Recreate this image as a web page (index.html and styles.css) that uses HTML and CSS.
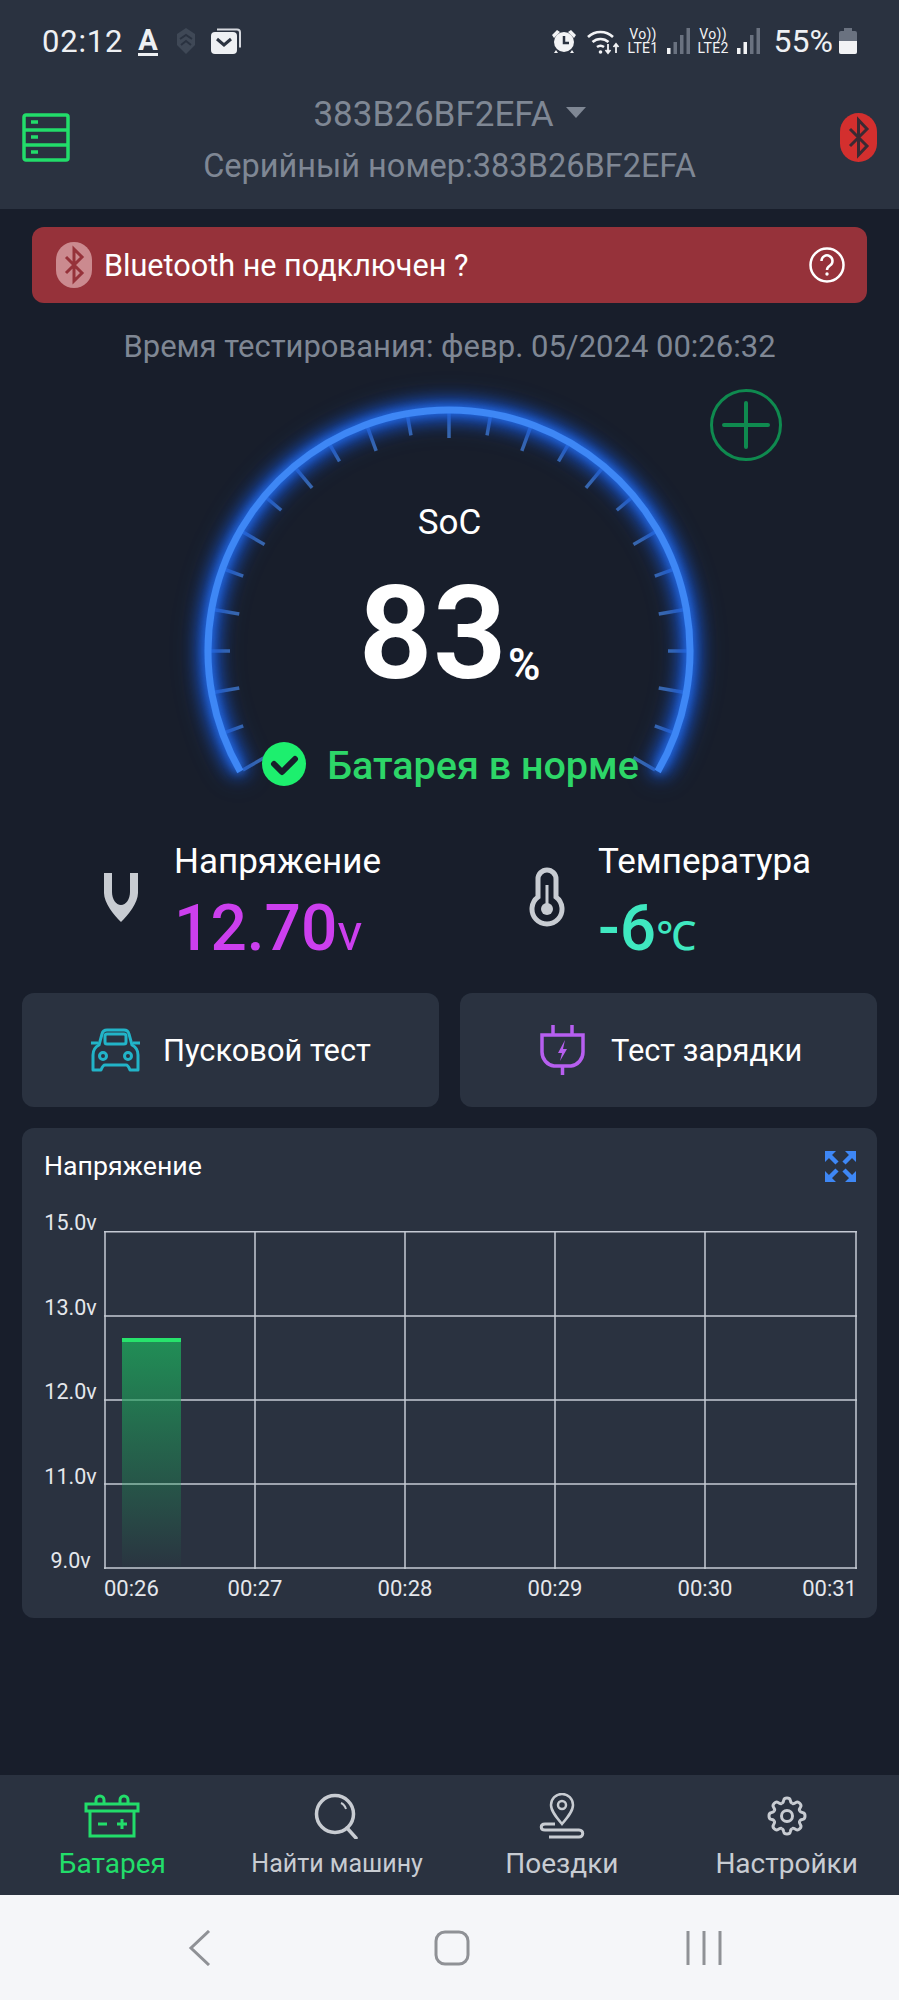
FILE: index.html
```html
<!DOCTYPE html>
<html lang="ru">
<head>
    <meta charset="UTF-8">
    <meta name="viewport" content="width=device-width, initial-scale=1.0">
    <title>Батарея</title>
    <link rel="stylesheet" href="styles.css">
</head>
<body>
<div class="app">
    <header class="header">
        <div class="status-bar">
            <div class="status-left">
                <span class="clock">02:12</span>
                <span class="status-a">A</span>
                <svg class="ic-shield" viewBox="0 0 20 28"><path d="M10 1l9 6v11l-9 9-9-9V7z" fill="#3f4856"/><path d="M4 12l6-4 6 4M5 18l5-4 5 4" fill="none" stroke="#2a3240" stroke-width="2"/></svg>
                <svg class="ic-mail" viewBox="0 0 31 26"><path d="M7 1.500h20a3 3 0 0 1 3 3v15" fill="none" stroke="#d5d8de" stroke-width="2"/><rect x="1" y="4" width="26" height="22" rx="4" fill="#eef0f3"/><path d="M7 11l7 6 7-6" fill="none" stroke="#2a3240" stroke-width="3"/></svg>
            </div>
            <div class="status-right">
                <svg class="ic-alarm" viewBox="0 0 26 26"><circle cx="13" cy="14" r="10" fill="#f2f3f5"/><path d="M1 7l5-5 3 2-6 6zM25 7l-5-5-3 2 6 6zM5 22l-2 3h4zM21 22l2 3h-4z" fill="#f2f3f5"/><path d="M13 8v7h5" fill="none" stroke="#2a3240" stroke-width="2.500"/></svg>
                <svg class="ic-wifi" viewBox="0 0 33 28"><g fill="none" stroke="#f2f3f5" stroke-width="2.600"><path d="M1 10a18 18 0 0 1 25 0"/><path d="M5.500 15a12 12 0 0 1 16 0"/><path d="M10 20a6 6 0 0 1 7 0"/></g><circle cx="13.500" cy="25" r="1.800" fill="#f2f3f5"/><path d="M21 17v9m-2.500-3l2.500 3 2.500-3M29 26v-9m-2.500 3l2.500-3 2.500 3" fill="none" stroke="#f2f3f5" stroke-width="1.800"/></svg>
                <span class="volte"><span>Vo))</span><span>LTE1</span></span>
                <svg class="ic-signal" viewBox="0 0 23 26"><rect x="0" y="20" width="3.500" height="6" fill="#f2f3f5"/><rect x="6.500" y="14" width="3.500" height="12" fill="#6a7280"/><rect x="13" y="7" width="3.500" height="19" fill="#6a7280"/><rect x="19.500" y="0" width="3.500" height="26" fill="#6a7280"/></svg>
                <span class="volte volte-2"><span>Vo))</span><span>LTE2</span></span>
                <svg class="ic-signal" viewBox="0 0 23 26"><rect x="0" y="20" width="3.500" height="6" fill="#f2f3f5"/><rect x="6.500" y="14" width="3.500" height="12" fill="#f2f3f5"/><rect x="13" y="7" width="3.500" height="19" fill="#6a7280"/><rect x="19.500" y="0" width="3.500" height="26" fill="#6a7280"/></svg>
                <span class="percent">55%</span>
                <svg class="ic-battery" viewBox="0 0 18 26"><path d="M5 0h8v3h3a2 2 0 0 1 2 2v19a2 2 0 0 1-2 2H2a2 2 0 0 1-2-2V5a2 2 0 0 1 2-2h3z" fill="#6a7280"/><path d="M0 13h18v11a2 2 0 0 1-2 2H2a2 2 0 0 1-2-2z" fill="#f2f3f5"/></svg>
            </div>
        </div>
        <div class="title-row">
            <svg class="ic-server" viewBox="0 0 48 49"><g fill="none" stroke="#22dd6a" stroke-width="3.500"><rect x="2" y="2" width="44" height="45" rx="2"/><path d="M2 17h44M2 32h44"/></g><path d="M9 9h7M9 24h7M9 39h7" stroke="#22dd6a" stroke-width="3.500"/></svg>
            <div class="title">
                <div class="device">383B26BF2EFA<span class="caret"></span></div>
                <div class="serial">Серийный номер:383B26BF2EFA</div>
            </div>
            <svg class="ic-bt" viewBox="0 0 37 49"><rect width="37" height="49" rx="18.500" fill="#d32f2e"/><path d="M10 16l17 17-8.500 9V7l8.500 9-17 17" fill="none" stroke="#3a2a33" stroke-width="3"/></svg>
        </div>
    </header>

    <main class="main">
        <div class="banner">
            <svg class="ic-bt-light" viewBox="0 0 36 46"><rect width="36" height="46" rx="18" fill="#cb8a8f"/><path d="M10 15l16 16-8 8V7l8 8-16 16" fill="none" stroke="#96323a" stroke-width="3"/></svg>
            <span class="banner-text">Bluetooth не подключен ?</span>
            <svg class="ic-help" viewBox="0 0 36 36"><circle cx="18" cy="18" r="16.500" fill="none" stroke="#fff" stroke-width="2.500"/><path d="M12.500 14a5.500 5.500 0 1 1 8.500 4.500c-2 1.300-3 2-3 4.500" fill="none" stroke="#fff" stroke-width="2.500"/><circle cx="18" cy="27" r="1.700" fill="#fff"/></svg>
        </div>
        <div class="test-time">Время тестирования: февр. 05/2024 00:26:32</div>

        <section class="gauge">
            <svg class="gauge-dial" viewBox="0 0 899 447">
                <g class="gauge-ticks">
                    <line class="long" x1="449" y1="50" x2="449" y2="75" transform="rotate(-120 449 288)"/>
                    <line x1="449" y1="50" x2="449" y2="69" transform="rotate(-110 449 288)"/>
                    <line class="long" x1="449" y1="50" x2="449" y2="75" transform="rotate(-100 449 288)"/>
                    <line x1="449" y1="50" x2="449" y2="69" transform="rotate(-90 449 288)"/>
                    <line class="long" x1="449" y1="50" x2="449" y2="75" transform="rotate(-80 449 288)"/>
                    <line x1="449" y1="50" x2="449" y2="69" transform="rotate(-70 449 288)"/>
                    <line class="long" x1="449" y1="50" x2="449" y2="75" transform="rotate(-60 449 288)"/>
                    <line x1="449" y1="50" x2="449" y2="69" transform="rotate(-50 449 288)"/>
                    <line class="long" x1="449" y1="50" x2="449" y2="75" transform="rotate(-40 449 288)"/>
                    <line x1="449" y1="50" x2="449" y2="69" transform="rotate(-30 449 288)"/>
                    <line class="long" x1="449" y1="50" x2="449" y2="75" transform="rotate(-20 449 288)"/>
                    <line x1="449" y1="50" x2="449" y2="69" transform="rotate(-10 449 288)"/>
                    <line class="long" x1="449" y1="50" x2="449" y2="75"/>
                    <line x1="449" y1="50" x2="449" y2="69" transform="rotate(10 449 288)"/>
                    <line class="long" x1="449" y1="50" x2="449" y2="75" transform="rotate(20 449 288)"/>
                    <line x1="449" y1="50" x2="449" y2="69" transform="rotate(30 449 288)"/>
                    <line class="long" x1="449" y1="50" x2="449" y2="75" transform="rotate(40 449 288)"/>
                    <line x1="449" y1="50" x2="449" y2="69" transform="rotate(50 449 288)"/>
                    <line class="long" x1="449" y1="50" x2="449" y2="75" transform="rotate(60 449 288)"/>
                    <line x1="449" y1="50" x2="449" y2="69" transform="rotate(70 449 288)"/>
                    <line class="long" x1="449" y1="50" x2="449" y2="75" transform="rotate(80 449 288)"/>
                    <line x1="449" y1="50" x2="449" y2="69" transform="rotate(90 449 288)"/>
                    <line class="long" x1="449" y1="50" x2="449" y2="75" transform="rotate(100 449 288)"/>
                    <line x1="449" y1="50" x2="449" y2="69" transform="rotate(110 449 288)"/>
                    <line class="long" x1="449" y1="50" x2="449" y2="75" transform="rotate(120 449 288)"/>
                </g>
                <path class="gauge-arc" d="M240.300 408.500A241 241 0 1 1 657.700 408.500"/>
            </svg>
            <svg class="gauge-add" viewBox="0 0 72 72"><circle cx="36" cy="36" r="34.500" fill="none" stroke="#0f8a4f" stroke-width="3"/><path d="M36 14v44M14 36h44" stroke="#0f8a4f" stroke-width="4" stroke-linecap="round"/></svg>
            <div class="gauge-text">
                <div class="soc-label">SoC</div>
                <div class="soc-value">83<span class="soc-unit">%</span></div>
                <div class="soc-status">
                    <svg class="ic-ok" viewBox="0 0 44 44"><circle cx="22" cy="22" r="22" fill="#1def6e"/><path d="M12 22l8 8 13-13" fill="none" stroke="#181e2b" stroke-width="6" stroke-linecap="round" stroke-linejoin="round"/></svg>
                    <span>Батарея в норме</span>
                </div>
            </div>
        </section>

        <section class="stats">
            <div class="stat stat-volt">
                <svg class="ic-volt" viewBox="0 0 36 50"><path d="M1 1h8v19c0 7 4 13 9 13s9-6 9-13V1h8v20c0 10-10 22-17 29C11 43 1 31 1 21z" fill="#c8ccd2"/></svg>
                <div>
                    <div class="stat-label">Напряжение</div>
                    <div class="stat-value volt">12.70<span class="stat-unit">v</span></div>
                </div>
            </div>
            <div class="stat stat-temp">
                <svg class="ic-temp" viewBox="0 0 36 60"><path d="M9 30V12a9 9 0 0 1 18 0V30a15 15 0 1 1-18 0z" fill="none" stroke="#c8ccd2" stroke-width="5"/><circle cx="18" cy="42" r="6" fill="#c8ccd2"/><path d="M18 18v22" stroke="#c8ccd2" stroke-width="3"/></svg>
                <div>
                    <div class="stat-label">Температура</div>
                    <div class="stat-value temp">-6<span class="stat-unit stat-unit-temp">℃</span></div>
                </div>
            </div>
        </section>

        <section class="tests">
            <div class="test-btn">
                <svg class="ic-car" viewBox="0 0 53 44"><g fill="none" stroke="#22b4c8" stroke-width="3" stroke-linejoin="round"><path d="M10 17L13 6Q14 2 18 2H35Q39 2 40 6L43 17Q49 20 49 27V42H41Q39 37 37 37H16Q14 37 12 42H4V27Q4 20 10 17Z"/><rect x="16" y="6" width="21" height="10" rx="2"/><circle cx="14" cy="28" r="3.500"/><circle cx="39" cy="28" r="3.500"/><path d="M9 15H2M44 15h7"/></g></svg>
                <span>Пусковой тест</span>
            </div>
            <div class="test-btn test-btn-charge">
                <svg class="ic-plug" viewBox="0 0 45 50"><g fill="none" stroke="#b75ff0" stroke-width="3.500"><path d="M2 10h41v17c0 7-5 13-12 14H14C7 40 2 34 2 27z"/><path d="M13 0v10M32 0v10M22.500 41v9"/></g><path d="M25 15l-7 13h4l-2 8 7-12h-4l2-9z" fill="#b75ff0"/></svg>
                <span>Тест зарядки</span>
            </div>
        </section>

        <section class="chart">
            <div class="chart-head">
                <span class="chart-title">Напряжение</span>
                <svg class="ic-expand" viewBox="0 0 33 33"><path d="M1 12V1h11zM21 1h11v11zM32 21v11H21zM12 32H1V21z" fill="#3e87f5"/><path d="M5 5l8 8M28 5l-8 8M28 28l-8-8M5 28l8-8" stroke="#3e87f5" stroke-width="4.500"/></svg>
            </div>
            <div class="chart-body">
                <div class="y-axis">
                    <span>15.0v</span>
                    <span>13.0v</span>
                    <span>12.0v</span>
                    <span>11.0v</span>
                    <span>9.0v</span>
                </div>
                <div class="plot-wrap">
                    <svg class="plot" viewBox="0 0 753 338">
                        <defs>
                            <linearGradient id="barFill" x1="0" y1="0" x2="0" y2="1">
                                <stop offset="0" stop-color="#1f9f5a" stop-opacity="0.85"/>
                                <stop offset="1" stop-color="#1f9f5a" stop-opacity="0.02"/>
                            </linearGradient>
                        </defs>
                        <g class="grid-lines">
                            <path d="M1 0v338M151 0v338M301 0v338M451 0v338M601 0v338M752 0v338"/>
                            <path d="M0 .750h753M0 85h753M0 169h753M0 253h753M0 337h753"/>
                        </g>
                        <rect x="18" y="107" width="59" height="230" fill="url(#barFill)"/>
                        <rect x="18" y="107" width="59" height="4" fill="#27e36c"/>
                    </svg>
                    <div class="x-axis">
                        <span>00:26</span>
                        <span>00:27</span>
                        <span>00:28</span>
                        <span>00:29</span>
                        <span>00:30</span>
                        <span>00:31</span>
                    </div>
                </div>
            </div>
        </section>
    </main>

    <nav class="tabbar">
        <div class="tab tab-active">
            <svg class="tab-icon" viewBox="0 0 56 46"><g fill="none" stroke="#22dd6a" stroke-width="3"><path d="M2 11h52v7H2zM6 18v25h44V18"/><path d="M12 11V7a4 4 0 0 1 8 0v4M36 11V7a4 4 0 0 1 8 0v4"/><path d="M14 31h9M33 31h10M38 26v10"/></g></svg>
            <span>Батарея</span>
        </div>
        <div class="tab tab-narrow">
            <svg class="tab-icon" viewBox="0 0 46 46"><g fill="none" stroke="#c8ccd2" stroke-width="3.500"><circle cx="21" cy="21" r="18.500"/><path d="M33 35l9 10" stroke-linecap="round"/><path d="M27 10c2.500 1 4 3 5 6" stroke-width="2"/></g></svg>
            <span>Найти машину</span>
        </div>
        <div class="tab">
            <svg class="tab-icon" viewBox="0 0 46 46"><g fill="none" stroke="#c8ccd2" stroke-width="2.500"><path d="M23 31C17 24 12 18 12 12a11 11 0 0 1 22 0c0 6-5 12-11 19z"/><circle cx="23" cy="12" r="4"/><path d="M16 31H6c-5 0-5 6 0 6h34c5 0 5 7 0 7H10" stroke-width="3"/></g></svg>
            <span>Поездки</span>
        </div>
        <div class="tab">
            <svg class="tab-icon" viewBox="0 0 40 46"><g fill="none" stroke="#c8ccd2" stroke-width="3" stroke-linejoin="round" transform="translate(0 3)">
                <path d="M14.830 7.530Q16.500 6.500 16.800 4Q17.200 2 20 2Q22.800 2 23.200 4Q23.500 6.500 25.170 7.530"/>
                <path d="M14.830 7.530Q16.500 6.500 16.800 4Q17.200 2 20 2Q22.800 2 23.200 4Q23.500 6.500 25.170 7.530" transform="rotate(45 20 20)"/>
                <path d="M14.830 7.530Q16.500 6.500 16.800 4Q17.200 2 20 2Q22.800 2 23.200 4Q23.500 6.500 25.170 7.530" transform="rotate(90 20 20)"/>
                <path d="M14.830 7.530Q16.500 6.500 16.800 4Q17.200 2 20 2Q22.800 2 23.200 4Q23.500 6.500 25.170 7.530" transform="rotate(135 20 20)"/>
                <path d="M14.830 7.530Q16.500 6.500 16.800 4Q17.200 2 20 2Q22.800 2 23.200 4Q23.500 6.500 25.170 7.530" transform="rotate(180 20 20)"/>
                <path d="M14.830 7.530Q16.500 6.500 16.800 4Q17.200 2 20 2Q22.800 2 23.200 4Q23.500 6.500 25.170 7.530" transform="rotate(225 20 20)"/>
                <path d="M14.830 7.530Q16.500 6.500 16.800 4Q17.200 2 20 2Q22.800 2 23.200 4Q23.500 6.500 25.170 7.530" transform="rotate(270 20 20)"/>
                <path d="M14.830 7.530Q16.500 6.500 16.800 4Q17.200 2 20 2Q22.800 2 23.200 4Q23.500 6.500 25.170 7.530" transform="rotate(315 20 20)"/>
                <circle cx="20" cy="20" r="5.500"/>
            </g></svg>
            <span>Настройки</span>
        </div>
    </nav>

    <div class="sysnav">
        <svg class="sys-icon" viewBox="0 0 24 36"><path d="M21 1L3 18l18 17" fill="none" stroke="#8f9196" stroke-width="3"/></svg>
        <svg class="sys-icon" viewBox="0 0 36 36"><rect x="2" y="2" width="32" height="32" rx="9" fill="none" stroke="#8f9196" stroke-width="3"/></svg>
        <svg class="sys-icon" viewBox="0 0 36 36"><path d="M2 1v34M18 1v34M34 1v34" stroke="#8f9196" stroke-width="3"/></svg>
    </div>
</div>
</body>
</html>
```

FILE: styles.css
```css
body {
    margin: 0;
    background-color: #181e2b;
    font-family: Roboto, "Noto Sans", sans-serif;
    color: #fff;
}
.app {
    width: 899px;
    height: 2000px;
    display: flex;
    flex-direction: column;
    overflow: hidden;
}

/* header */
.header {
    height: 209px;
    background-color: #2a3240;
}
.status-bar {
    height: 82px;
    padding: 0 42px;
    display: flex;
    justify-content: space-between;
    align-items: center;
}
.status-left, .status-right {
    display: flex;
    align-items: center;
}
.clock {
    font-size: 31px;
    color: #eef0f3;
    letter-spacing: 0.8px;
}
.status-a {
    margin-left: 15px;
    font-size: 29px;
    font-weight: 700;
    line-height: 26px;
    color: #eef0f3;
    border-bottom: 3px solid #eef0f3;
}
.ic-shield {
    width: 20px;
    height: 28px;
    margin-left: 18px;
}
.ic-mail {
    width: 31px;
    height: 26px;
    margin-left: 14px;
}
.ic-alarm {
    width: 26px;
    height: 26px;
}
.ic-wifi {
    width: 33px;
    height: 28px;
    margin-left: 10px;
}
.volte {
    display: flex;
    flex-direction: column;
    align-items: center;
    margin-left: 8px;
    font-size: 14px;
    line-height: 14px;
    letter-spacing: 0.3px;
    color: #f2f3f5;
}
.volte-2 {
    margin-left: 8px;
}
.ic-signal {
    width: 23px;
    height: 26px;
    margin-left: 8px;
}
.percent {
    margin-left: 14px;
    font-size: 32px;
    color: #eef0f3;
}
.ic-battery {
    width: 18px;
    height: 26px;
    margin-left: 6px;
}
.title-row {
    display: grid;
    grid-template-columns: 48px 1fr 37px;
    padding: 7px 22px 0;
}
.ic-server, .ic-bt {
    width: 100%;
    height: 49px;
    margin-top: 24px;
}
.title {
    padding-right: 11px;
    text-align: center;
    color: #7f8794;
}
.device {
    font-size: 35px;
    line-height: 52px;
}
.caret {
    display: inline-block;
    margin-left: 12px;
    vertical-align: 8px;
    border-left: 10px solid transparent;
    border-right: 10px solid transparent;
    border-top: 11px solid #7f8794;
}
.serial {
    font-size: 32.5px;
    line-height: 50px;
}

/* main */
.main {
    flex: 1;
}
.banner {
    height: 76px;
    margin: 18px 32px 0;
    padding: 0 22px 0 24px;
    box-sizing: border-box;
    background-color: #96323a;
    border-radius: 12px;
    display: flex;
    align-items: center;
}
.ic-bt-light {
    width: 36px;
    height: 46px;
}
.banner-text {
    flex: 1;
    margin-left: 12px;
    font-size: 30.6px;
}
.ic-help {
    width: 36px;
    height: 36px;
}
.test-time {
    margin-top: 28px;
    text-align: center;
    font-size: 31px;
    line-height: 32px;
    color: #7f8794;
}

/* gauge */
.gauge {
    position: relative;
    height: 447px;
}
.gauge-dial {
    display: block;
    width: 899px;
    height: 447px;
}
.gauge-ticks line {
    stroke: #3a68ad;
    stroke-width: 3.5;
}
.gauge-arc {
    fill: none;
    stroke: #3e87f5;
    stroke-width: 7;
    filter: drop-shadow(0 0 4px #2a74f0) drop-shadow(0 0 8px #1a5ce0) drop-shadow(0 0 10px #1450c8);
}
.gauge-add {
    position: absolute;
    left: 710px;
    top: 26px;
    width: 72px;
    height: 72px;
}
.gauge-text {
    position: absolute;
    top: 140px;
    left: 0;
    right: 0;
    display: flex;
    flex-direction: column;
    align-items: center;
}
.soc-label {
    font-size: 35px;
    line-height: 40px;
}
.soc-value {
    margin-top: 31px;
    font-size: 130px;
    font-weight: 600;
    line-height: 120px;
}
.soc-unit {
    margin-left: 1px;
    font-size: 44px;
    line-height: 0;
    vertical-align: -2px;
}
.soc-status {
    margin-top: 47px;
    display: flex;
    align-items: center;
    color: #2dd668;
    font-size: 39.5px;
    font-weight: 500;
    line-height: 50px;
}
.ic-ok {
    width: 44px;
    height: 44px;
    margin-left: 2px;
    margin-right: 21px;
    margin-top: -4px;
}

/* stats */
.stats {
    display: grid;
    grid-template-columns: 449px 450px;
    padding: 32px 0 30px;
}
.stat {
    display: flex;
    align-items: center;
    padding-left: 103px;
}
.stat-temp {
    padding-left: 80px;
}
.ic-volt {
    width: 36px;
    height: 50px;
    margin-right: 35px;
    margin-top: -12px;
}
.ic-temp {
    width: 36px;
    height: 60px;
    margin-right: 33px;
    margin-top: -12px;
}
.stat-label {
    font-size: 35px;
    line-height: 40px;
}
.stat-value {
    margin-top: 12px;
    font-size: 64px;
    font-weight: 500;
    line-height: 69px;
}
.stat-unit {
    font-size: 52px;
    font-weight: 400;
    line-height: 0;
}
.stat-unit-temp {
    font-size: 40px;
    font-weight: 500;
    letter-spacing: -3px;
}
.volt {
    color: #cc3fee;
}
.temp {
    color: #3fe8c0;
}

/* buttons */
.tests {
    display: grid;
    grid-template-columns: 1fr 1fr;
    gap: 21px;
    padding: 0 22px;
}
.test-btn {
    height: 114px;
    background-color: #2a3240;
    border-radius: 12px;
    display: flex;
    align-items: center;
    padding-left: 67px;
    gap: 21px;
    font-size: 30.8px;
}
.test-btn-charge {
    padding-left: 80px;
    gap: 26px;
}
.ic-car {
    width: 53px;
    height: 44px;
}
.ic-plug {
    width: 45px;
    height: 50px;
}

/* chart */
.chart {
    height: 490px;
    margin: 21px 22px 0;
    padding: 0 20px 0 22px;
    box-sizing: border-box;
    background-color: #2a3240;
    border-radius: 12px;
}
.chart-head {
    height: 76px;
    display: flex;
    justify-content: space-between;
    align-items: center;
}
.chart-title {
    font-size: 26.7px;
}
.ic-expand {
    width: 33px;
    height: 33px;
}
.chart-body {
    display: flex;
    margin-top: 7px;
}
.y-axis {
    width: 53px;
    height: 362px;
    margin-right: 7px;
    display: flex;
    flex-direction: column;
    justify-content: space-between;
    text-align: center;
    font-size: 21.5px;
    line-height: 24px;
    color: #e4e7ec;
}
.plot-wrap {
    margin-top: 20px;
}
.plot {
    display: block;
    width: 753px;
    height: 338px;
}
.grid-lines path {
    fill: none;
    stroke: #c5cad4;
    stroke-width: 1.5;
}
.x-axis {
    display: grid;
    grid-template-columns: 76px 150px 150px 150px 150px 77px;
    margin-top: 7px;
    text-align: center;
    font-size: 22px;
    line-height: 26px;
    color: #e4e7ec;
}
.x-axis span:first-child {
    text-align: left;
}
.x-axis span:last-child {
    text-align: right;
}

/* tab bar */
.tabbar {
    height: 120px;
    padding-top: 18px;
    box-sizing: border-box;
    background-color: #2a3240;
    display: grid;
    grid-template-columns: repeat(4, 1fr);
}
.tab {
    display: flex;
    flex-direction: column;
    align-items: center;
    color: #c8ccd2;
    font-size: 28px;
    line-height: 30px;
    white-space: nowrap;
}
.tab-narrow {
    font-size: 25px;
}
.tab-active {
    color: #22dd6a;
}
.tab-icon {
    height: 46px;
    margin-bottom: 10px;
}
.sysnav {
    height: 105px;
    background-color: #f5f6f9;
    display: grid;
    grid-template-columns: repeat(3, 252px);
    padding-left: 74px;
    justify-items: center;
    align-items: center;
}
.sys-icon {
    height: 36px;
}
```
